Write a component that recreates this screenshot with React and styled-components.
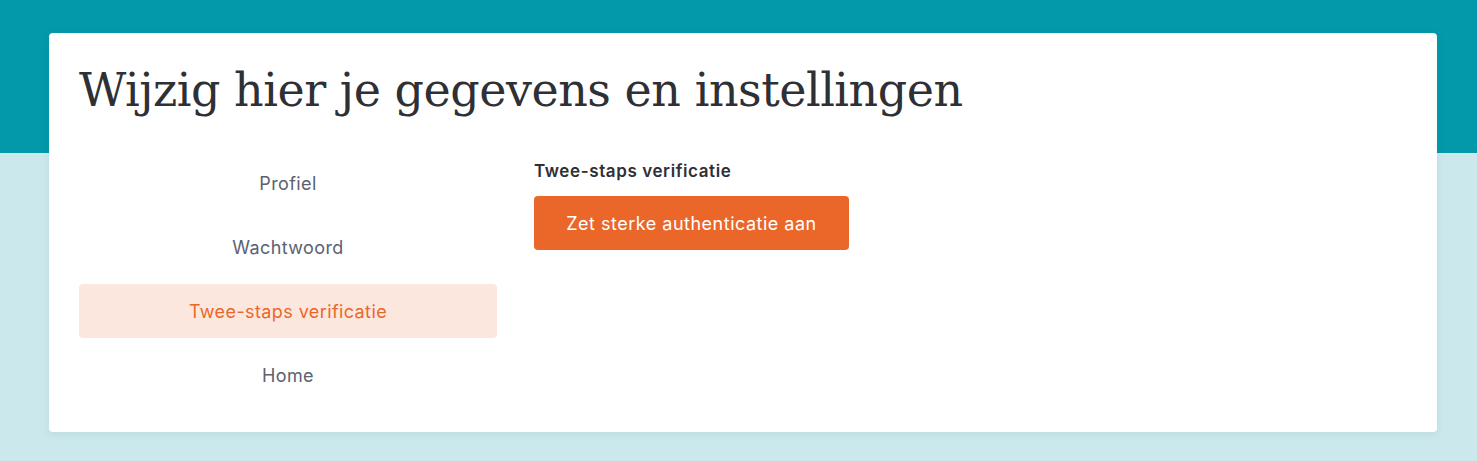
import React from 'react';
import styled, { createGlobalStyle } from 'styled-components';

const GlobalStyle = createGlobalStyle`
    html, body {
        margin: 0;
        padding: 0;
    }

    body {
        background: #cbe9ec;
        font-family: Inter, 'Noto Sans', sans-serif;
    }
`;

const Page = styled.div`
    min-height: 461px;
    background: linear-gradient(to bottom, #0399aa 0, #0399aa 153px, #cbe9ec 153px);
    padding: 33px 40px 29px 49px;
    box-sizing: border-box;
`;

const Card = styled.main`
    background: #fff;
    border-radius: 4px;
    box-shadow: 0 2px 8px rgba(0, 60, 70, 0.08);
    padding: 25px 31px 30px 30px;
    min-height: 399px;
    box-sizing: border-box;
`;

const Title = styled.h1`
    margin: 0 0 34px 0;
    font-family: 'DejaVu Serif', 'Liberation Serif', serif;
    font-weight: 400;
    font-size: 46px;
    line-height: 64px;
    color: #2e3035;
    letter-spacing: -0.48px;
`;

const Split = styled.div`
    display: grid;
    grid-template-columns: 418px 1fr;
    column-gap: 37px;
`;

const Nav = styled.nav`
    display: flex;
    flex-direction: column;
    gap: 10px;
`;

const NavItem = styled.a`
    display: flex;
    align-items: center;
    justify-content: center;
    height: 54px;
    border-radius: 4px;
    font-size: 18px;
    letter-spacing: 0.4px;
    text-decoration: none;
    color: ${({ $active }) => ($active ? '#ea6729' : '#5b6170')};
    background: ${({ $active }) => ($active ? '#fce7df' : 'transparent')};
    cursor: pointer;
`;

const Content = styled.section``;

const SectionTitle = styled.h2`
    margin: 0 0 16px 0;
    font-size: 17px;
    font-weight: 600;
    line-height: 18px;
    letter-spacing: 0.6px;
    color: #2e3035;
    padding-top: 6px;
`;

const Button = styled.button`
    height: 54px;
    width: 315px;
    border: none;
    border-radius: 4px;
    background: #ea6729;
    color: #fff;
    font-family: inherit;
    font-size: 18px;
    letter-spacing: 0.5px;
    cursor: pointer;
`;

const links = ['Profiel', 'Wachtwoord', 'Twee-staps verificatie', 'Home'];

const App = () => (
    <>
        <GlobalStyle />
        <Page>
            <Card>
                <Title>Wijzig hier je gegevens en instellingen</Title>
                <Split>
                    <Nav>
                        {links.map((link) => (
                            <NavItem key={link} $active={link === 'Twee-staps verificatie'}>
                                {link}
                            </NavItem>
                        ))}
                    </Nav>
                    <Content>
                        <SectionTitle>Twee-staps verificatie</SectionTitle>
                        <Button type="button">Zet sterke authenticatie aan</Button>
                    </Content>
                </Split>
            </Card>
        </Page>
    </>
);

export default App;
